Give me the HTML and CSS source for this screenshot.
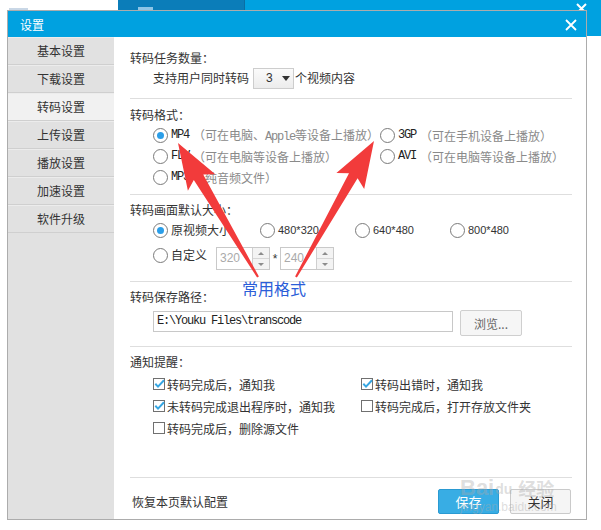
FILE: index.html
```html
<!DOCTYPE html>
<html lang="zh-CN">
<head>
<meta charset="utf-8">
<title>设置</title>
<link rel="stylesheet" href="styles.css">
</head>
<body>
<div class="deskbar">
  <div class="desk-left"><span class="desk-icon"></span></div>
  <div class="desk-tab"><span class="tab-icon"></span></div>
  <div class="desk-blue"><svg class="desk-close" width="11" height="11" viewBox="0 0 11 11"><path d="M1 1L10 10M10 1L1 10" stroke="#fff" stroke-width="2"/></svg></div>
</div>

<div class="dialog">
  <div class="titlebar">
    <span class="title">设置</span>
    <svg class="close" width="12" height="12" viewBox="0 0 12 12"><path d="M1 1L11 11M11 1L1 11" stroke="#fff" stroke-width="1.8"/></svg>
  </div>
  <div class="dlg-body">
    <nav class="side">
      <div class="nav-item">基本设置</div>
      <div class="nav-item">下载设置</div>
      <div class="nav-item active">转码设置</div>
      <div class="nav-item">上传设置</div>
      <div class="nav-item">播放设置</div>
      <div class="nav-item">加速设置</div>
      <div class="nav-item">软件升级</div>
    </nav>
    <main class="content">
      <section class="sec sec-count">
        <div class="sec-title">转码任务数量：</div>
        <div class="row indent">
          <span>支持用户同时转码</span>
          <span class="select"><span class="select-val">3</span><span class="caret"></span></span>
          <span>个视频内容</span>
        </div>
      </section>

      <section class="sec sec-format">
        <div class="sec-title">转码格式：</div>
        <div class="fmt-grid indent">
          <label class="opt"><span class="radio on"></span><span class="mono">MP4</span><span class="hint">（可在电脑、<span class="mono">Apple</span>等设备上播放）</span></label>
          <label class="opt"><span class="radio"></span><span class="mono">3GP</span><span class="hint">（可在手机设备上播放）</span></label>
          <label class="opt"><span class="radio"></span><span class="mono">FLV</span><span class="hint">（可在电脑等设备上播放）</span></label>
          <label class="opt"><span class="radio"></span><span class="mono">AVI</span><span class="hint">（可在电脑等设备上播放）</span></label>
          <label class="opt"><span class="radio"></span><span class="mono">MP3</span><span class="hint">（纯音频文件）</span></label>
        </div>
      </section>

      <section class="sec sec-size">
        <div class="sec-title">转码画面默认大小：</div>
        <div class="size-grid indent">
          <label class="opt"><span class="radio on"></span>原视频大小</label>
          <label class="opt"><span class="radio"></span><span class="num">480*320</span></label>
          <label class="opt"><span class="radio"></span><span class="num">640*480</span></label>
          <label class="opt"><span class="radio"></span><span class="num">800*480</span></label>
        </div>
        <div class="custom-row indent">
          <label class="opt custom"><span class="radio"></span>自定义</label>
          <span class="spin"><span class="spin-val">320</span><span class="spin-btns"><span class="spin-up"></span><span class="spin-down"></span></span></span>
          <span class="times">*</span>
          <span class="spin"><span class="spin-val">240</span><span class="spin-btns"><span class="spin-up"></span><span class="spin-down"></span></span></span>
        </div>
      </section>

      <section class="sec sec-path">
        <div class="sec-title">转码保存路径：</div>
        <div class="path-row indent">
          <span class="path-input">E:\Youku Files\transcode</span>
          <span class="btn btn-browse">浏览...</span>
        </div>
      </section>

      <section class="sec sec-notify">
        <div class="sec-title">通知提醒：</div>
        <div class="chk-grid indent">
          <label class="chk"><svg width="12" height="12" viewBox="0 0 12 12"><rect x="0.5" y="0.5" width="11" height="11" fill="#fff" stroke="#707070"/><path d="M2.3 5.8L5 8.6L11 2.2" fill="none" stroke="#36a6e2" stroke-width="2"/></svg>转码完成后，通知我</label>
          <label class="chk"><svg width="12" height="12" viewBox="0 0 12 12"><rect x="0.5" y="0.5" width="11" height="11" fill="#fff" stroke="#707070"/><path d="M2.3 5.8L5 8.6L11 2.2" fill="none" stroke="#36a6e2" stroke-width="2"/></svg>转码出错时，通知我</label>
          <label class="chk"><svg width="12" height="12" viewBox="0 0 12 12"><rect x="0.5" y="0.5" width="11" height="11" fill="#fff" stroke="#707070"/><path d="M2.3 5.8L5 8.6L11 2.2" fill="none" stroke="#36a6e2" stroke-width="2"/></svg>未转码完成退出程序时，通知我</label>
          <label class="chk"><svg width="12" height="12" viewBox="0 0 12 12"><rect x="0.5" y="0.5" width="11" height="11" fill="#fff" stroke="#707070"/></svg>转码完成后，打开存放文件夹</label>
          <label class="chk"><svg width="12" height="12" viewBox="0 0 12 12"><rect x="0.5" y="0.5" width="11" height="11" fill="#fff" stroke="#707070"/></svg>转码完成后，删除源文件</label>
        </div>
      </section>

      <footer class="foot">
        <span class="restore">恢复本页默认配置</span>
        <span class="btn btn-save">保存</span>
        <span class="btn btn-close">关闭</span>
      </footer>
    </main>
  </div>
</div>

<svg class="annot" width="601" height="530" viewBox="0 0 601 530">
  <polygon fill="#f23b3b" points="178,143 215.3,174.3 203.2,174.5 258.9,276.5 257.1,277.5 193.8,180.1 187.9,190.7"/>
  <polygon fill="#f23b3b" points="374,141 364.2,188.9 357.6,178.3 296.9,277.5 295.1,276.5 349,173.3 336.4,173.1"/>
</svg>
<div class="annot-label">常用格式</div>

<div class="watermark">
  <div class="wm-top"><span class="wm-bai">Bai</span><span class="wm-paw">du</span><span class="wm-jy">经验</span></div>
  <div class="wm-url">jingyan.baidu.com</div>
</div>
</body>
</html>
```

FILE: styles.css
```css
* { box-sizing: border-box; margin: 0; padding: 0; }

body {
  width: 601px;
  height: 530px;
  overflow: hidden;
  position: relative;
  background: #fff;
  font-family: "Noto Sans CJK SC", "Noto Sans", sans-serif;
  font-size: 12px;
  color: #333;
}

/* background window */
.deskbar { display: flex; height: 36px; }
.desk-left { width: 118px; background: #fff; padding: 8px 0 0 9px; }
.desk-icon { display: block; width: 19px; height: 6px; background: #c9d7e6; }
.desk-tab { width: 127px; background: #0b7db9; border-right: 1px solid #0a6ea4; padding: 7px 0 0 20px; }
.tab-icon { display: block; width: 15px; height: 6px; background: #8ec5e6; }
.desk-blue { flex: 1; background: #00a1e0; display: flex; justify-content: flex-end; padding: 3px 14px 0 0; }

/* dialog window */
.dialog {
  position: absolute;
  left: 7px;
  top: 10px;
  width: 580px;
  height: 510px;
  border: 1px solid #acacac;
  background: #fff;
  display: flex;
  flex-direction: column;
}
.titlebar {
  height: 26px;
  flex: none;
  background: #00a1e0;
  display: flex;
  align-items: center;
  justify-content: space-between;
  padding: 1px 9px 0 12px;
  color: #fff;
}
.title { font-size: 12px; line-height: 16px; }

.dlg-body { flex: 1; display: flex; min-height: 0; }

.side { width: 106px; flex: none; background: #e1e1e1; }
.nav-item {
  height: 28px;
  line-height: 26px;
  text-align: center;
  border-top: 1px solid #ececec;
  border-bottom: 1px solid #cfcfcf;
  color: #333;
}
.nav-item.active { background: #f1f1f1; }

.content {
  flex: 1;
  padding: 0 14px 0 16px;
  display: flex;
  flex-direction: column;
}

.sec { border-bottom: 1px solid #dedede; flex: none; }
.sec-title { height: 20px; line-height: 20px; }
.indent { padding-left: 23px; }

.sec-count { height: 62px; padding-top: 11px; }
.sec-format { height: 96px; padding-top: 6px; }
.sec-size { height: 87px; padding-top: 5px; }
.sec-path { height: 65px; padding-top: 5px; }
.sec-notify { flex: 1; padding-top: 5px; }

.row { display: flex; align-items: center; height: 20px; line-height: 20px; }
.select {
  width: 41px;
  height: 21px;
  margin: 0 1px 0 4px;
  border: 1px solid #cdcdcd;
  background: linear-gradient(#fbfbfb, #ececec);
  display: flex;
  align-items: center;
  padding-left: 12px;
}
.select-val { font-family: "Liberation Sans", sans-serif; font-size: 12px; width: 16px; }
.caret {
  width: 0; height: 0;
  border-left: 4px solid transparent;
  border-right: 4px solid transparent;
  border-top: 5px solid #333;
}

.opt { display: flex; align-items: center; white-space: nowrap; }
.radio {
  width: 15px; height: 15px;
  flex: none;
  border: 1px solid #7a7a7a;
  border-radius: 50%;
  background: #fff;
  margin-right: 3px;
  position: relative;
}
.radio.on::after {
  content: "";
  position: absolute;
  left: 3px; top: 3px;
  width: 7px; height: 7px;
  border-radius: 50%;
  background: #2b9ee8;
}
.mono {
  font-family: "Liberation Mono", monospace;
  font-size: 12px;
  letter-spacing: -1.2px;
  color: #222;
}
.hint { color: #8a8a8a; margin-left: 4px; }
.hint .mono { color: #8a8a8a; }
.num { font-family: "Liberation Sans", sans-serif; font-size: 11px; color: #333; }

.fmt-grid { display: grid; grid-template-columns: 227px auto; grid-auto-rows: 21px; line-height: 21px; }
.size-grid { display: grid; grid-template-columns: 107px 95px 95px auto; height: 20px; line-height: 20px; }

.custom-row { display: flex; align-items: flex-start; margin-top: 6px; height: 24px; }
.custom { width: 54px; height: 18px; line-height: 18px; margin-right: 9px; }
.spin {
  display: flex;
  width: 54px;
  height: 23px;
  margin-top: 1px;
  border: 1px solid #c9c9c9;
  background: #fff;
}
.spin-val {
  width: 36px;
  border-right: 1px solid #cfcfcf;
  padding-left: 3px;
  line-height: 21px;
  color: #aaa;
  font-family: "Liberation Sans", sans-serif;
  font-size: 12px;
}
.spin-btns { flex: 1; display: flex; flex-direction: column; }
.spin-up, .spin-down { flex: 1; background: #f3f3f3; display: flex; align-items: center; justify-content: center; }
.spin-up { border-bottom: 1px solid #d6d6d6; }
.spin-up::before {
  content: "";
  border-left: 3px solid transparent;
  border-right: 3px solid transparent;
  border-bottom: 3px solid #8c8c8c;
}
.spin-down::before {
  content: "";
  border-left: 3px solid transparent;
  border-right: 3px solid transparent;
  border-top: 3px solid #8c8c8c;
}
.times { width: 10px; text-align: center; line-height: 24px; margin-top: 1px; font-family: "Liberation Sans", sans-serif; }

.path-row { display: flex; align-items: flex-start; margin-top: 3px; height: 26px; }
.path-input {
  width: 300px;
  height: 21px;
  margin-top: 1px;
  border: 1px solid #c8c8c8;
  padding-left: 3px;
  line-height: 19px;
  font-family: "Liberation Mono", monospace;
  font-size: 12px;
  letter-spacing: -1.2px;
  color: #222;
}
.btn { display: flex; align-items: center; justify-content: center; }
.btn-browse {
  margin-left: 7px;
  width: 62px;
  height: 26px;
  border: 1px solid #cfcfcf;
  border-radius: 2px;
  background: #f6f6f6;
  color: #666;
}

.chk-grid { display: grid; grid-template-columns: 208px auto; grid-auto-rows: 22px; margin-top: 1px; }
.chk { display: flex; align-items: center; white-space: nowrap; }
.chk svg { flex: none; margin-right: 2px; }

.foot {
  height: 41px;
  flex: none;
  display: flex;
  align-items: center;
  padding: 11px 1px 5px 2px;
}
.restore { margin-right: auto; }
.btn-save {
  width: 61px;
  height: 25px;
  background: #38ade4;
  border: 1px solid #2a9ad2;
  border-radius: 2px;
  color: #fff;
  font-size: 13px;
}
.btn-close {
  margin-left: 11px;
  width: 61px;
  height: 25px;
  background: #f5f5f5;
  border: 1px solid #cacaca;
  border-radius: 2px;
  color: #333;
  font-size: 13px;
}

/* annotations over the screenshot */
.annot { position: absolute; left: 0; top: 0; pointer-events: none; }
.annot-label {
  position: absolute;
  left: 242px;
  top: 278px;
  font-size: 16px;
  line-height: 20px;
  color: #2b5ed8;
}

.watermark {
  position: absolute;
  left: 460px;
  top: 468px;
  pointer-events: none;
  color: rgba(170, 170, 170, 0.4);
  font-family: "Liberation Sans", sans-serif;
}
.wm-top { display: flex; align-items: flex-end; height: 32px; }
.wm-bai { font-size: 22px; font-weight: bold; line-height: 24px; }
.wm-paw { font-size: 14px; font-weight: bold; line-height: 22px; margin: 0 6px 0 1px; }
.wm-jy { font-family: "Noto Sans CJK SC", sans-serif; font-size: 18px; line-height: 24px; font-weight: bold; }
.wm-url { font-size: 12px; line-height: 14px; }
```
